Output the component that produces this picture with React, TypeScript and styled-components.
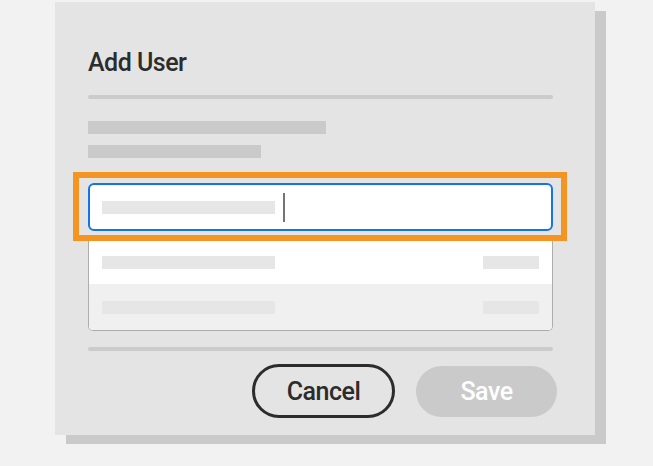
import React from "react";
import styled, { createGlobalStyle } from "styled-components";

const GlobalStyle = createGlobalStyle`
  html, body {
    margin: 0;
    padding: 0;
    background: #f2f2f2;
  }
  body {
    font-family: Roboto, "Liberation Sans", sans-serif;
  }
`;

const Page = styled.div`
  width: 653px;
  height: 466px;
  padding: 2px 0 0 55px;
  box-sizing: border-box;
  overflow: hidden;
`;

const Dialog = styled.div`
  width: 540px;
  height: 433px;
  box-sizing: border-box;
  background: #e4e4e4;
  box-shadow: 11px 9px 0 #cacaca;
  padding: 48px 42px 0 33px;
  display: flex;
  flex-direction: column;
`;

const Title = styled.h1`
  margin: 0;
  font-family: Roboto, "Liberation Sans", sans-serif;
  font-size: 25px;
  line-height: 25px;
  font-weight: 500;
  letter-spacing: -0.5px;
  color: #2c2c2c;
`;

const Divider = styled.div<{ $top: number }>`
  margin-top: ${(p) => p.$top}px;
  height: 4px;
  border-radius: 2px;
  background: #cbcbcb;
`;

const Skeleton = styled.div<{ $w: number; $top?: number; $tone?: "dark" | "light" }>`
  width: ${(p) => p.$w}px;
  height: 13px;
  margin-top: ${(p) => p.$top ?? 0}px;
  background: ${(p) => (p.$tone === "light" ? "#e6e6e6" : "#cacaca")};
  flex-shrink: 0;
`;

const FocusFrame = styled.div`
  margin: 14px -14px 0 -15px;
  border: 6px solid #f39423;
  padding: 5px 8px 4px 9px;
  position: relative;
  z-index: 1;
`;

const Input = styled.div`
  height: 48px;
  box-sizing: border-box;
  border: 2px solid #1473e6;
  border-radius: 6px;
  background: #ffffff;
  padding: 0 12px;
  display: flex;
  align-items: center;
`;

const Caret = styled.span`
  width: 2px;
  height: 29px;
  margin-left: 8px;
  background: #757575;
`;

const List = styled.div`
  border: 1px solid #adadad;
  border-top: none;
  border-radius: 0 0 5px 5px;
  overflow: hidden;
  background: #ffffff;
`;

const Row = styled.div<{ $h: number; $alt?: boolean }>`
  height: ${(p) => p.$h}px;
  background: ${(p) => (p.$alt ? "#f0f0f0" : "#ffffff")};
  padding: 0 13px 0 13px;
  display: flex;
  align-items: center;
  justify-content: space-between;
`;

const Actions = styled.div`
  margin-top: 13px;
  margin-right: -4px;
  display: flex;
  justify-content: flex-end;
  align-items: center;
  gap: 21px;
`;

const Button = styled.button<{ $variant: "outline" | "disabled" }>`
  font-family: Roboto, "Liberation Sans", sans-serif;
  font-size: 25px;
  font-weight: 500;
  letter-spacing: -0.5px;
  border-radius: 28px;
  box-sizing: border-box;
  padding: 0;
  display: flex;
  align-items: center;
  justify-content: center;
  ${(p) =>
    p.$variant === "outline"
      ? `
    width: 143px;
    height: 54px;
    border: 3px solid #2c2c2c;
    background: transparent;
    color: #2c2c2c;
  `
      : `
    width: 141px;
    height: 51px;
    border: none;
    background: #cacaca;
    color: #ffffff;
  `}
`;

export default function App() {
  return (
    <>
      <GlobalStyle />
      <Page>
        <Dialog>
          <Title>Add User</Title>
          <Divider $top={20} />
          <Skeleton $w={238} $top={22} />
          <Skeleton $w={173} $top={11} />
          <FocusFrame>
            <Input>
              <Skeleton $w={173} $tone="light" />
              <Caret />
            </Input>
          </FocusFrame>
          <List>
            <Row $h={43}>
              <Skeleton $w={173} $tone="light" />
              <Skeleton $w={56} $tone="light" />
            </Row>
            <Row $h={46} $alt>
              <Skeleton $w={173} $tone="light" />
              <Skeleton $w={56} $tone="light" />
            </Row>
          </List>
          <Divider $top={16} />
          <Actions>
            <Button $variant="outline">Cancel</Button>
            <Button $variant="disabled">Save</Button>
          </Actions>
        </Dialog>
      </Page>
    </>
  );
}
